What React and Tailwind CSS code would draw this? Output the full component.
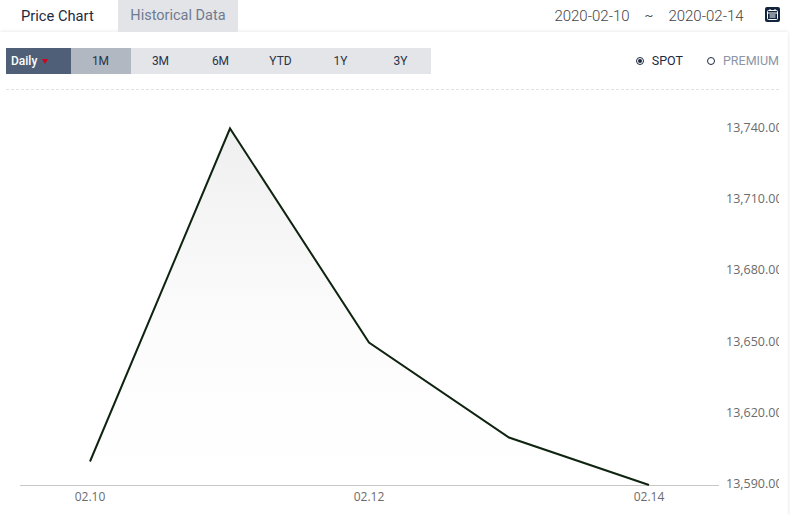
import React from "react";

const ranges = ["1M", "3M", "6M", "YTD", "1Y", "3Y"];
const yLabels = [
  ["13,740.00", 128],
  ["13,710.00", 199],
  ["13,680.00", 270],
  ["13,650.00", 342],
  ["13,620.00", 413],
  ["13,590.00", 484],
];
const xLabels = [
  ["02.10", 90],
  ["02.12", 369],
  ["02.14", 649],
];

function CalendarIcon() {
  return (
    <svg width="15" height="15" viewBox="0 0 15 15" className="block">
      <rect x="0" y="0" width="15" height="15" rx="2" fill="#12233f" />
      <rect x="2.5" y="3.5" width="10" height="9" rx="1" fill="none" stroke="#fff" strokeWidth="1" />
      <path d="M2.5 6H12.5M4.5 8H10.5M4.5 10H10.5M5 2V4M10 2V4" stroke="#fff" strokeWidth="1" fill="none" />
    </svg>
  );
}

function Chart() {
  return (
    <svg width="780" height="425" viewBox="0 90 780 425" className="block">
      <defs>
        <linearGradient id="area" x1="0" y1="0" x2="0" y2="1">
          <stop offset="0" stopColor="#efefef" />
          <stop offset="0.5" stopColor="#fbfbfb" />
          <stop offset="0.8" stopColor="#fefefe" />
          <stop offset="1" stopColor="#ffffff" />
        </linearGradient>
      </defs>
      <path d="M90 461.5L230 128.5L369 342.5L509 437.5L649 485Z" fill="url(#area)" />
      <line x1="20" y1="485.5" x2="719" y2="485.5" stroke="#c8c8c8" />
      <polyline points="90,461.5 230,128.5 369,342.5 509,437.5 649,485" fill="none" stroke="#0f2410" strokeWidth="2" />
      {yLabels.map(([label, y]) => (
        <text key={label} x="726" y={y + 4} fontSize="12.5" fill="#6b6b6b" fontFamily="'Open Sans', sans-serif">{label}</text>
      ))}
      {xLabels.map(([label, x]) => (
        <text key={label} x={x} y="501" textAnchor="middle" fontSize="12" fill="#6b6b6b" fontFamily="'Open Sans', sans-serif">{label}</text>
      ))}
    </svg>
  );
}

export default function App() {
  return (
    <div className="w-[790px] h-[515px] overflow-hidden bg-white font-['Roboto',sans-serif]">
      <div className="flex h-[32px] items-stretch">
        <div className="w-[118px] flex items-center pl-[21px] text-[14.7px] text-[#1d2a3f]">Price Chart</div>
        <div className="w-[120px] flex items-center justify-center text-[14.5px] text-[#6f7b90] bg-[#e3e4e8]">Historical Data</div>
        <div className="ml-auto flex items-center pr-[10px]">
          <div className="w-[86px] text-center text-[15px] font-light text-[#444444]">2020-02-10</div>
          <div className="w-[28px] text-center text-[13px] text-[#555555]">~</div>
          <div className="w-[86px] text-center text-[15px] font-light text-[#444444]">2020-02-14</div>
          <div className="ml-[16px] -mt-[3px]"><CalendarIcon /></div>
        </div>
      </div>
      <div className="h-[483px] w-[788px] shadow-[0_0_4px_rgba(0,0,0,0.12)] pl-[6px] pr-[9px] pt-[16px]">
        <div className="flex items-center h-[26px]">
          <div className="w-[65px] h-full flex items-center pl-[5px] gap-[5px] bg-[#4f5f78] text-white text-[12px] font-medium">
            Daily
            <span className="w-0 h-0 border-x-[3px] border-x-transparent border-t-[5px] border-t-[#d0021b] mt-[1px]"></span>
          </div>
          {ranges.map((r, i) => (
            <div key={r} className={`w-[60px] h-full flex items-center justify-center pr-[1px] text-[12px] text-[#2a3347] ${i === 0 ? "bg-[#b1b8c2]" : "bg-[#e4e5e9]"}`}>
              {r}
            </div>
          ))}
          <div className="ml-auto flex items-center text-[12.5px]">
            <span className="w-[8px] h-[8px] rounded-full border border-[#1d2a3f] flex items-center justify-center">
              <span className="w-[4px] h-[4px] rounded-full bg-[#1d2a3f]"></span>
            </span>
            <span className="ml-[8px] text-[#1d2a3f]">SPOT</span>
            <span className="ml-[24px] w-[8px] h-[8px] rounded-full border border-[#1d2a3f]"></span>
            <span className="ml-[8px] text-[#8b95a6]">PREMIUM</span>
          </div>
        </div>
        <div className="mt-[15px] border-t border-dashed border-[#e2e2e2]"></div>
        <div className="-ml-[6px] overflow-hidden">
          <Chart />
        </div>
      </div>
    </div>
  );
}
